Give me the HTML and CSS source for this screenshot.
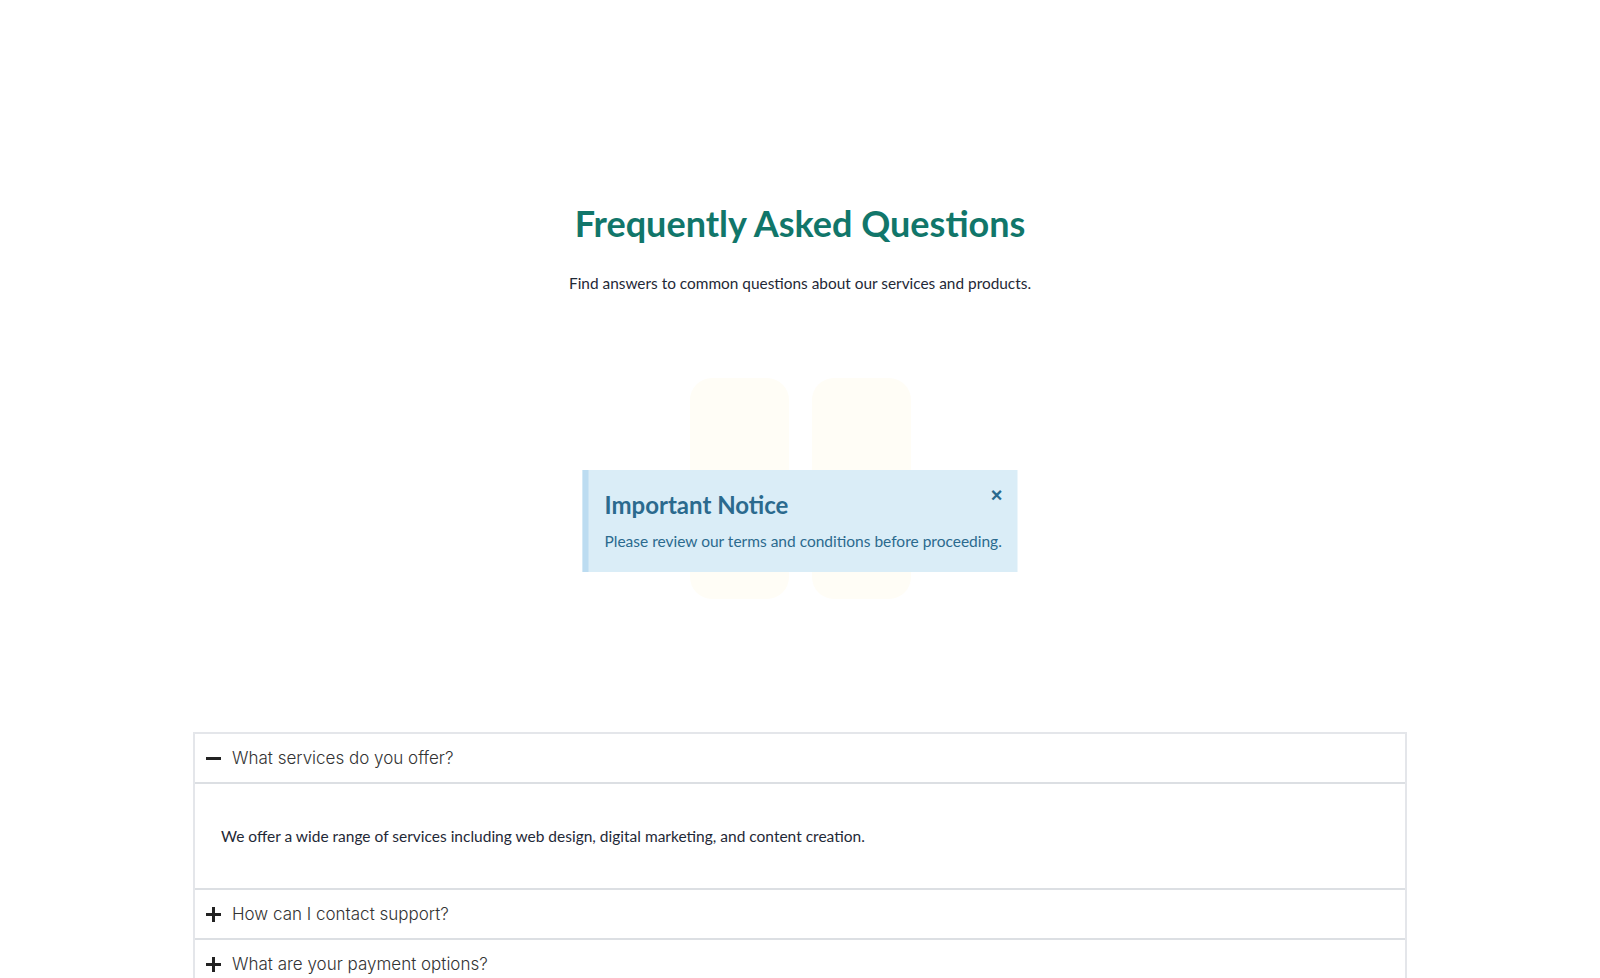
FILE: index.html
```html
<!DOCTYPE html>
<html lang="en">
<head>
  <meta charset="UTF-8">
  <meta name="viewport" content="width=device-width, initial-scale=1.0">
  <title>FAQ</title>
  <link rel="stylesheet" href="styles.css">
</head>
<body>

  <section class="hero">
    <h1>Frequently Asked Questions</h1>
    <p class="lead">Find answers to common questions about our services and products.</p>

    <!-- Decorative blocks with the notice on top -->
    <div class="stage">
      <div class="shape"></div>
      <div class="shape"></div>

      <div class="notice" id="notice">
        <button class="notice-close" onclick="document.getElementById('notice').style.display='none'">&times;</button>
        <h2>Important Notice</h2>
        <p>Please review our terms and conditions before proceeding.</p>
      </div>
    </div>
  </section>

  <!-- Accordion -->
  <div class="accordion">
    <div class="item open">
      <div class="item-header" onclick="toggleItem(this)">
        <span class="icon"></span>
        <span class="question">What services do you offer?</span>
      </div>
      <div class="item-body">
        <p>We offer a wide range of services including web design, digital marketing, and content creation.</p>
      </div>
    </div>

    <div class="item">
      <div class="item-header" onclick="toggleItem(this)">
        <span class="icon"></span>
        <span class="question">How can I contact support?</span>
      </div>
      <div class="item-body">
        <p>You can reach our support team by email or through the contact form on our website.</p>
      </div>
    </div>

    <div class="item">
      <div class="item-header" onclick="toggleItem(this)">
        <span class="icon"></span>
        <span class="question">What are your payment options?</span>
      </div>
      <div class="item-body">
        <p>We accept all major credit cards, PayPal and bank transfers.</p>
      </div>
    </div>
  </div>

  <script>
    // Open or close an accordion item
    function toggleItem(header) {
      header.parentNode.classList.toggle('open');
    }
  </script>

</body>
</html>
```

FILE: styles.css
```css
body {
  margin: 0;
  padding: 0;
  font-family: Lato, "Noto Sans", sans-serif;
  background-color: #fff;
  color: #1f2937;
}

.hero {
  padding-top: 201px;
  text-align: center;
}

h1 {
  margin: 0;
  font-size: 36px;
  line-height: 44px;
  font-weight: 700;
  color: #11766a;
}

.lead {
  margin: 26px 0 0;
  font-size: 15.4px;
  line-height: 24px;
  color: #1f2937;
}

.stage {
  position: relative;
  display: flex;
  justify-content: center;
  gap: 23px;
  margin-top: 83px;
  height: 221px;
}

.shape {
  width: 99px;
  height: 221px;
  border-radius: 22px;
  background-color: #fffdf6;
}

.notice {
  position: absolute;
  top: 92px;
  left: 50%;
  transform: translateX(-50%);
  width: 435px;
  box-sizing: border-box;
  padding: 20px 10px 20px 16px;
  background-color: #daedf7;
  border-left: 6px solid #bcdcf1;
  text-align: left;
  color: #2b6a8e;
}

.notice h2 {
  margin: 0;
  font-size: 24px;
  line-height: 30px;
  font-weight: 700;
}

.notice p {
  margin: 10px 0 0;
  font-size: 15.5px;
  line-height: 22px;
  white-space: nowrap;
}

.notice-close {
  position: absolute;
  top: 15px;
  right: 15px;
  padding: 0;
  border: none;
  background: none;
  font-size: 20px;
  line-height: 20px;
  font-weight: 700;
  color: #2b6a8e;
  cursor: pointer;
}

.accordion {
  width: 1214px;
  box-sizing: border-box;
  margin: 133px auto 0;
  border: 2px solid #e4e6ea;
  border-bottom: none;
}

.item {
  border-bottom: 2px solid #dcdfe3;
}

.item-header {
  display: flex;
  align-items: center;
  gap: 11px;
  height: 48px;
  padding-left: 11px;
  cursor: pointer;
}

.icon {
  position: relative;
  width: 15px;
  height: 15px;
}

.icon::before,
.icon::after {
  content: "";
  position: absolute;
  background-color: #222;
}

.icon::before {
  left: 0;
  top: 6px;
  width: 15px;
  height: 3px;
}

.icon::after {
  left: 6px;
  top: 0;
  width: 3px;
  height: 15px;
}

.item.open .icon::after {
  display: none;
}

.question {
  font-family: Inter, sans-serif;
  font-weight: 300;
  font-size: 17px;
  color: #333;
}

.item-body {
  display: none;
  border-top: 2px solid #dcdfe3;
  padding: 25px 26px;
}

.item.open .item-body {
  display: block;
}

.item-body p {
  margin: 16px 0;
  font-size: 15.5px;
  line-height: 22px;
  color: #1f2937;
}
```
